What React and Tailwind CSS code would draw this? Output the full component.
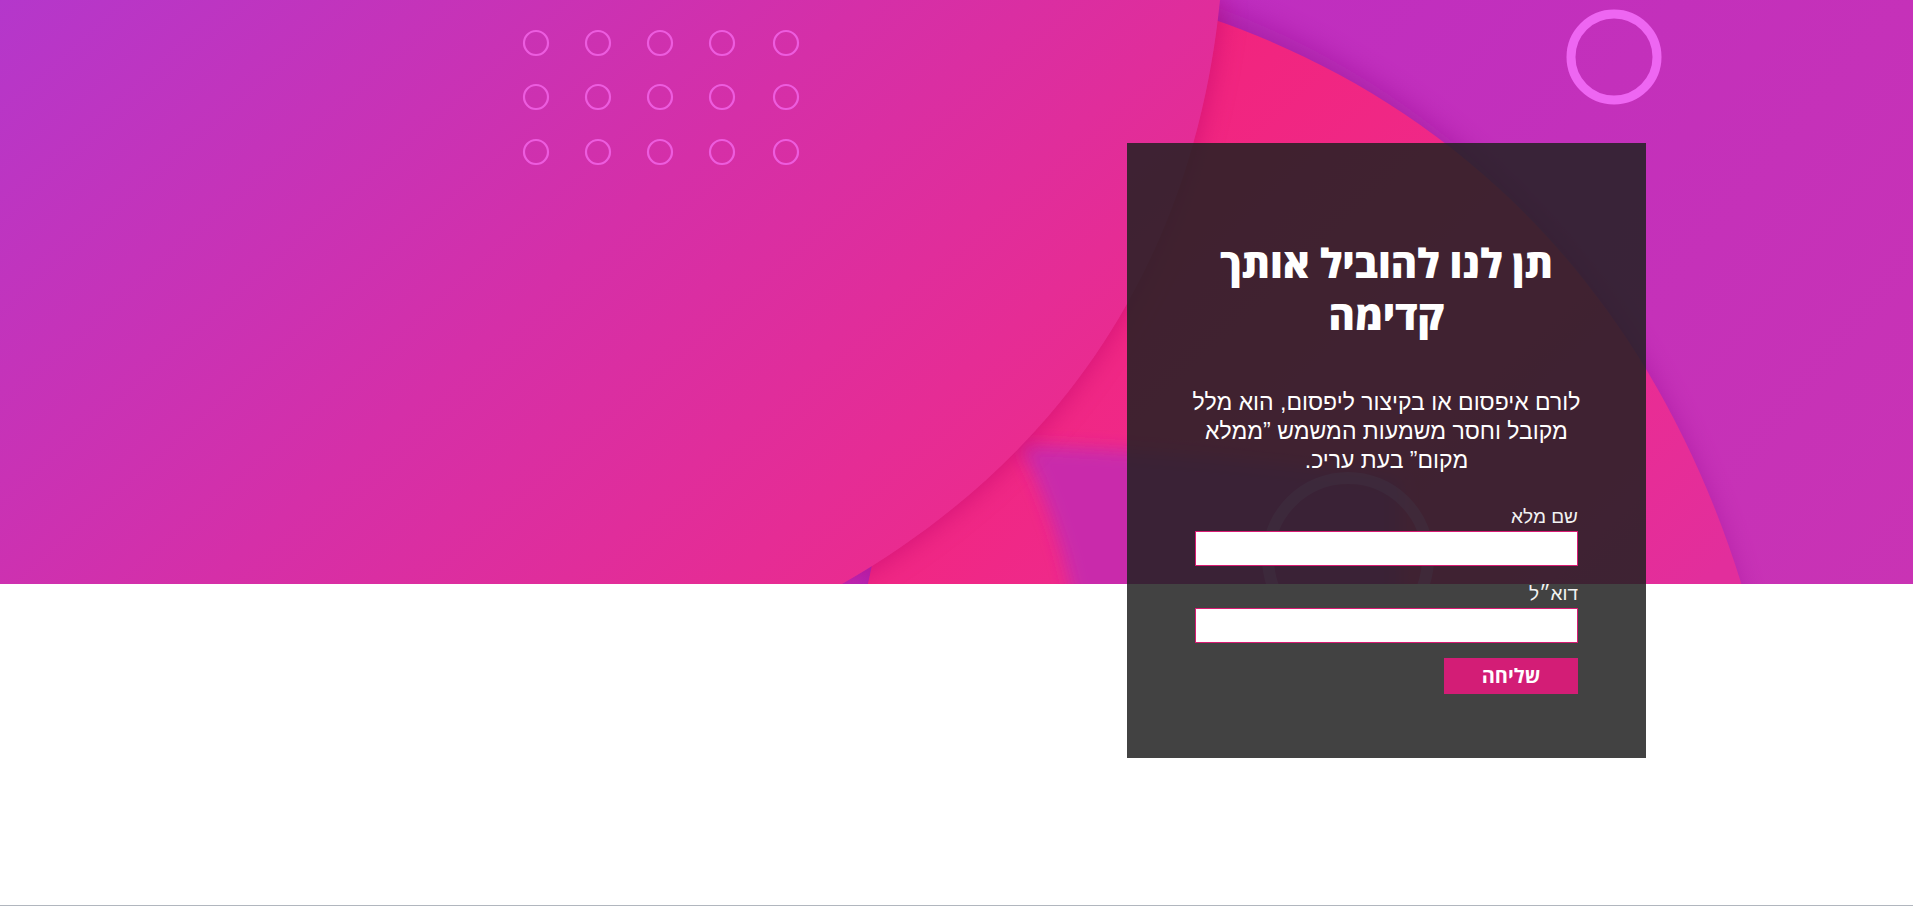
import React from "react";

function HeroBg() {
  const cols = [536, 598, 660, 722, 786];
  const rows = [43, 97, 152];
  return (
    <svg className="block h-full w-full" viewBox="0 0 1913 584" preserveAspectRatio="none">
      <defs>
        <linearGradient id="gBase" x1="1200" y1="0" x2="1913" y2="584" gradientUnits="userSpaceOnUse">
          <stop offset="0" stopColor="#bf2ec0" />
          <stop offset="1" stopColor="#c933b4" />
        </linearGradient>
        <linearGradient id="gA" x1="0" y1="0" x2="760" y2="860" gradientUnits="userSpaceOnUse">
          <stop offset="0" stopColor="#b437cb" />
          <stop offset="0.5" stopColor="#d52fa8" />
          <stop offset="1" stopColor="#f02a88" />
        </linearGradient>
        <linearGradient id="gB" x1="1150" y1="0" x2="1700" y2="584" gradientUnits="userSpaceOnUse">
          <stop offset="0" stopColor="#f2237b" />
          <stop offset="0.6" stopColor="#ee2b8e" />
          <stop offset="1" stopColor="#e22e9c" />
        </linearGradient>
        <filter id="blur14" x="-20%" y="-20%" width="140%" height="140%">
          <feGaussianBlur stdDeviation="14" />
        </filter>
        <filter id="blur8" x="-20%" y="-20%" width="140%" height="140%">
          <feGaussianBlur stdDeviation="8" />
        </filter>
      </defs>
      <rect width="1913" height="584" fill="url(#gBase)" />
      {/* shadow above pink shape */}
      <path d="M860,620 L1000,-20 L1130,-20 C1400,50 1650,250 1745,620 Z" fill="#8e0f8c" opacity="0.45" filter="url(#blur14)" />
      {/* pink shape */}
      <path d="M860,620 L1000,-20 L1130,-5 C1400,60 1650,250 1752,620 Z" fill="url(#gB)" />
      {/* purple band below */}
      <path
        d="M1020,445 C1046,495 1062,545 1074,600 L1400,600 L1400,480 C1260,460 1110,448 1020,445 Z"
        fill="#c92aab"
        filter="url(#blur8)"
      />
      {/* shadow of big left shape */}
      <path d="M0,0 H1220 C1200,200 1110,430 842,584 H0 Z" fill="#b5106c" opacity="0.55" filter="url(#blur14)" />
      {/* big left shape */}
      <path d="M0,0 H1220 C1200,200 1110,430 842,584 H0 Z" fill="url(#gA)" />
      {/* dots grid */}
      {rows.map((y) =>
        cols.map((x) => (
          <circle key={`${x}-${y}`} cx={x} cy={y} r="12" fill="none" stroke="#f062e4" strokeWidth="2.2" opacity="0.9" />
        ))
      )}
      {/* top-right ring */}
      <circle cx="1614" cy="57" r="43" fill="none" stroke="#ee66f2" strokeWidth="9" />
      {/* faint ring behind the card */}
      <circle cx="1348" cy="558" r="80" fill="none" stroke="#e890ff" strokeWidth="12" opacity="0.45" />
    </svg>
  );
}

function Card() {
  return (
    <div
      dir="rtl"
      className="flex h-[615px] w-[519px] flex-col bg-[rgba(33,33,33,0.85)] px-[68px] pt-[94px] text-white"
      style={{ fontFamily: '"Liberation Sans", "DejaVu Sans", sans-serif' }}
    >
      <h2
        className="-mx-[40px] text-center text-[40px] font-extrabold leading-[52px]"
        style={{ fontFamily: '"Open Sans", "DejaVu Sans", sans-serif' }}
      >
        תן לנו להוביל אותך
        <br />
        קדימה
      </h2>
      <p className="-mx-[40px] mt-[47px] text-center text-[23px] leading-[29px]">
        לורם איפסום או בקיצור ליפסום, הוא מלל
        <br />
        מקובל וחסר משמעות המשמש ”ממלא
        <br />
        מקום” בעת עריכ.
      </p>
      <form className="mt-[30px] flex flex-col" onSubmit={(e) => e.preventDefault()}>
        <label className="text-[19px] leading-[24px] text-[#f2f2f2]">שם מלא</label>
        <input type="text" className="mt-[2px] h-[35px] w-full border border-[#d81b73] bg-white outline-none" />
        <label className="mt-[16px] text-[19px] leading-[24px] text-[#f2f2f2]">דוא״ל</label>
        <input type="email" className="mt-[2px] h-[35px] w-full border border-[#d81b73] bg-white outline-none" />
        <button
          type="submit"
          className="mt-[15px] h-[36px] w-[134px] self-start bg-[#d31d76] text-[20px] font-bold leading-none text-white"
          style={{ fontFamily: '"Open Sans", "DejaVu Sans", sans-serif' }}
        >
          שליחה
        </button>
      </form>
    </div>
  );
}

export default function App() {
  return (
    <div className="relative box-border h-[906px] w-full overflow-hidden border-b border-[#b1b6be] bg-white">
      <div className="absolute inset-x-0 top-0 h-[584px]">
        <HeroBg />
      </div>
      <div className="relative flex justify-end pr-[267px] pt-[143px]">
        <Card />
      </div>
    </div>
  );
}
